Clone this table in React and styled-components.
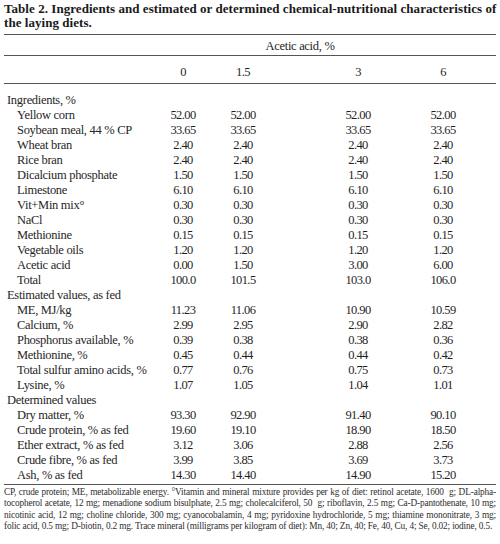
import React from "react";
import styled, { createGlobalStyle } from "styled-components";

const Global = createGlobalStyle`
  html, body {
    margin: 0;
    padding: 0;
    background: #fff;
  }
  body {
    width: 500px;
    font-family: "Liberation Serif", "Times New Roman", serif;
    color: #262626;
  }
`;

const columns = ["0", "1.5", "3", "6"];

const sections = [
  {
    title: "Ingredients, %",
    rows: [
      ["Yellow corn", "52.00", "52.00", "52.00", "52.00"],
      ["Soybean meal, 44 % CP", "33.65", "33.65", "33.65", "33.65"],
      ["Wheat bran", "2.40", "2.40", "2.40", "2.40"],
      ["Rice bran", "2.40", "2.40", "2.40", "2.40"],
      ["Dicalcium phosphate", "1.50", "1.50", "1.50", "1.50"],
      ["Limestone", "6.10", "6.10", "6.10", "6.10"],
      ["Vit+Min mix°", "0.30", "0.30", "0.30", "0.30"],
      ["NaCl", "0.30", "0.30", "0.30", "0.30"],
      ["Methionine", "0.15", "0.15", "0.15", "0.15"],
      ["Vegetable oils", "1.20", "1.20", "1.20", "1.20"],
      ["Acetic acid", "0.00", "1.50", "3.00", "6.00"],
      ["Total", "100.0", "101.5", "103.0", "106.0"],
    ],
  },
  {
    title: "Estimated values, as fed",
    rows: [
      ["ME, MJ/kg", "11.23", "11.06", "10.90", "10.59"],
      ["Calcium, %", "2.99", "2.95", "2.90", "2.82"],
      ["Phosphorus available, %", "0.39", "0.38", "0.38", "0.36"],
      ["Methionine, %", "0.45", "0.44", "0.44", "0.42"],
      ["Total sulfur amino acids, %", "0.77", "0.76", "0.75", "0.73"],
      ["Lysine, %", "1.07", "1.05", "1.04", "1.01"],
    ],
  },
  {
    title: "Determined values",
    rows: [
      ["Dry matter, %", "93.30", "92.90", "91.40", "90.10"],
      ["Crude protein, % as fed", "19.60", "19.10", "18.90", "18.50"],
      ["Ether extract, % as fed", "3.12", "3.06", "2.88", "2.56"],
      ["Crude fibre, % as fed", "3.99", "3.85", "3.69", "3.73"],
      ["Ash, % as fed", "14.30", "14.40", "14.90", "15.20"],
    ],
  },
];

const footnote = [
  "CP, crude protein; ME, metabolizable energy. °Vitamin and mineral mixture provides per kg of diet: retinol acetate, 1600\u00a0 g; DL-alpha-",
  "tocopherol acetate, 12 mg; menadione sodium bisulphate, 2.5 mg; cholecalciferol, 50\u00a0 g; riboflavin, 2.5 mg; Ca-D-pantothenate, 10 mg;",
  "nicotinic acid, 12 mg; choline chloride, 300 mg; cyanocobalamin, 4 mg; pyridoxine hydrochloride, 5 mg; thiamine mononitrate, 3 mg;",
  "folic acid, 0.5 mg; D-biotin, 0.2 mg. Trace mineral (milligrams per kilogram of diet): Mn, 40; Zn, 40; Fe, 40, Cu, 4; Se, 0.02; iodine, 0.5.",
];

const App = () => {
  return (
    <>
      <Global />
      <Page>
        <Caption>
          Table 2. Ingredients and estimated or determined chemical-nutritional characteristics of
          <br />
          the laying diets.
        </Caption>
        <Rule />
        <Row $pad="4px 0 1px">
          <GroupHead>Acetic acid, %</GroupHead>
        </Row>
        <Rule />
        <Row $pad="9px 0 3px">
          <span />
          {columns.map((c) => (
            <Value key={c}>{c}</Value>
          ))}
        </Row>
        <Rule />
        <Body>
          {sections.map((s) => (
            <React.Fragment key={s.title}>
              <Row>
                <Label>{s.title}</Label>
              </Row>
              {s.rows.map(([label, ...vals]) => (
                <Row key={label}>
                  <Label $indent>{label}</Label>
                  {vals.map((v, i) => (
                    <Value key={i}>{v}</Value>
                  ))}
                </Row>
              ))}
            </React.Fragment>
          ))}
        </Body>
        <Rule />
        <Notes>
          {footnote.map((line, i) => (
            <NoteLine key={i} $last={i === footnote.length - 1}>
              {line}
            </NoteLine>
          ))}
        </Notes>
      </Page>
    </>
  );
};

export default App;

const Page = styled.div`
  padding: 2px 4px 0 4px;
`;

const Caption = styled.h1`
  margin: 0 0 4px;
  font-size: 13px;
  line-height: 14px;
  font-weight: bold;
  color: #1a1a1a;
  white-space: nowrap;
  letter-spacing: 0.05px;
`;

const Rule = styled.div`
  border-top: 1.5px solid #555;
`;

const Row = styled.div`
  display: grid;
  grid-template-columns: 159px 40px 20px 40px 75px 40px 45px 40px 1fr;
  align-items: center;
  height: 15px;
  padding: ${(p) => p.$pad || "0"};
  font-size: 12.5px;
  line-height: 15px;

  & > :nth-child(2) {
    grid-column: 2;
  }
  & > :nth-child(3) {
    grid-column: 4;
  }
  & > :nth-child(4) {
    grid-column: 6;
  }
  & > :nth-child(5) {
    grid-column: 8;
  }
`;

const Body = styled.div`
  padding: 9px 0 1px;
`;

const GroupHead = styled.div`
  grid-column: 2 / 9 !important;
  text-align: center;
  padding-right: 26px;
  letter-spacing: -0.3px;
`;

const Label = styled.div`
  padding-left: ${(p) => (p.$indent ? "13px" : "3px")};
  white-space: nowrap;
  letter-spacing: -0.3px;
`;

const Value = styled.div`
  text-align: center;
  white-space: nowrap;
  letter-spacing: -0.6px;
  color: #1f1f1f;
`;

const Notes = styled.div`
  padding-top: 2px;
  font-size: 9.3px;
  line-height: 11.3px;
  color: #2e2e2e;
`;

const NoteLine = styled.div`
  text-align: justify;
  text-align-last: ${(p) => (p.$last ? "left" : "justify")};
  white-space: nowrap;
  letter-spacing: -0.15px;
`;
